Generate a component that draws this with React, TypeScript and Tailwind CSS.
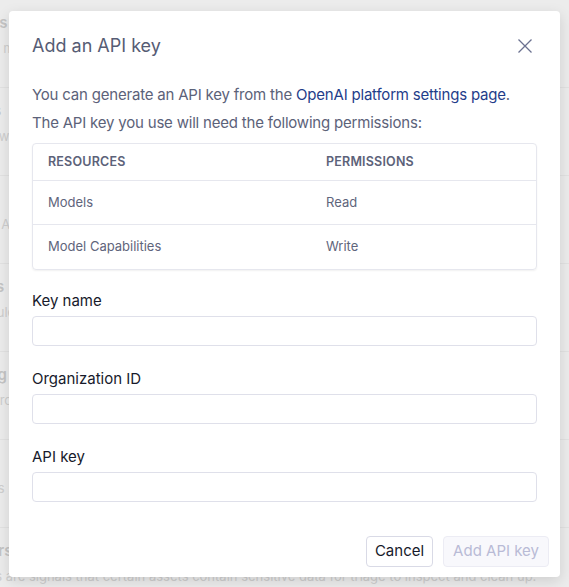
import React from 'react';

const settingsRows = [
  { title: 'Settings', desc: 'Add and manage integrations for your workspace and organization.' },
  { title: 'Models', desc: 'Choose which models users can access from the assistant panel here.' },
  { title: 'Keys', desc: 'Manage API keys and rotate them regularly for better security.' },
  { title: 'Policies', desc: 'Define rules that apply to every request sent from this workspace.' },
  { title: 'Logging', desc: 'Export prompt and response logs to your own storage bucket.' },
  { title: 'Search', desc: 'Let users search across connected knowledge sources and documents, rank.' },
  { title: 'Monitors', desc: 'Monitors are signals that certain assets contain sensitive data for triage to inspect and clean up.' },
];

const permissions = [
  { resource: 'Models', permission: 'Read' },
  { resource: 'Model Capabilities', permission: 'Write' },
];

const Field = ({ label }: { label: string }) => (
  <div className="flex flex-col">
    <label className="mb-[5px] text-[15px] leading-5 text-[#171a2b]">{label}</label>
    <input className="h-[30px] w-full rounded-[4px] border border-[#dfe0ea] bg-white px-2 text-sm outline-none" />
  </div>
);

export default function App() {
  return (
    <div className="relative h-[587px] w-[569px] overflow-hidden bg-[#ececec] font-['Inter',sans-serif]">
      {/* settings page behind the dialog */}
      <div className="flex flex-col pl-[-30px]">
        {settingsRows.map((row) => (
          <div key={row.title} className="-ml-[52px] h-[88px] border-b border-[#e2e2e2] pt-3">
            <div className="text-[15px] font-semibold text-[#c4c4c4]">{row.title}</div>
            <div className="mt-1 whitespace-nowrap text-[13px] text-[#cecece]">{row.desc}</div>
          </div>
        ))}
      </div>

      {/* dialog */}
      <div className="absolute left-[9px] top-[11px] flex h-[566px] w-[551px] flex-col rounded-[4px] bg-white shadow-[0_4px_14px_rgba(0,0,0,0.13)]">
        <div className="flex items-center justify-between pl-[23px] pr-[27px] pt-[23px]">
          <h2 className="text-[18px] leading-6 text-[#565c74]">Add an API key</h2>
          <svg width="16" height="16" viewBox="0 0 16 16" fill="none" stroke="#6b7190" strokeWidth="1.3">
            <path d="M1.5 1.5l13 13M14.5 1.5l-13 13" />
          </svg>
        </div>

        <div className="px-[23px] pt-[27px]">
          <p className="text-[15px] leading-5 tracking-[-0.2px] text-[#5c6279]">
            You can generate an API key from the{' '}
            <span className="text-[#1f3d8a]">OpenAI platform settings page</span>.
          </p>
          <p className="mt-2 text-[15px] leading-5 tracking-[-0.2px] text-[#5c6279]">
            The API key you use will need the following permissions:
          </p>

          <div className="mt-[10px] overflow-hidden rounded-[4px] border border-[#e6e7ee] shadow-[0_1px_2px_rgba(0,0,0,0.06)]">
            <div className="grid h-[37px] grid-cols-[278px_1fr] items-center border-b border-[#e6e7ee] px-[15px] text-[12.5px] font-semibold tracking-[0.2px] text-[#5c6279]">
              <span>RESOURCES</span>
              <span>PERMISSIONS</span>
            </div>
            {permissions.map((p, i) => (
              <div
                key={p.resource}
                className={`grid h-[44px] grid-cols-[278px_1fr] items-center px-[15px] text-[13px] text-[#5f657c] ${
                  i === 0 ? 'border-b border-[#e6e7ee]' : ''
                }`}
              >
                <span>{p.resource}</span>
                <span>{p.permission}</span>
              </div>
            ))}
          </div>

          <div className="mt-[21px] flex flex-col gap-[23px]">
            <Field label="Key name" />
            <Field label="Organization ID" />
            <Field label="API key" />
          </div>
        </div>

        <div className="mt-auto flex justify-end gap-[10px] pb-[10px] pr-[11px]">
          <button className="h-[31px] rounded-[4px] border border-[#d9dae6] bg-white px-[8px] text-[15px] text-[#171a2b]">
            Cancel
          </button>
          <button
            disabled
            className="h-[31px] rounded-[4px] border border-[#ececf4] bg-[#f8f8fc] px-[9px] text-[15px] text-[#b9bbd6]"
          >
            Add API key
          </button>
        </div>
      </div>
    </div>
  );
}
